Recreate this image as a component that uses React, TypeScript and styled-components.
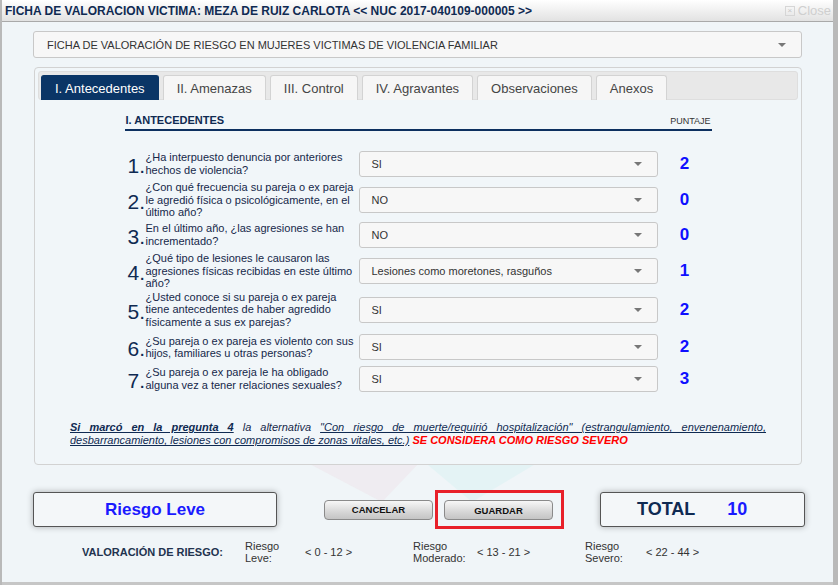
import React from "react";
import styled, { createGlobalStyle } from "styled-components";

const GlobalStyle = createGlobalStyle`
  *, *::before, *::after {
    box-sizing: border-box;
  }
  html, body {
    margin: 0;
    padding: 0;
    background: #b9b9b9;
    font-family: "Liberation Sans", Arial, sans-serif;
  }
`;

// preguntas de la ficha (h = alto de la fila)
const preguntas = [
  { texto: "¿Ha interpuesto denuncia por anteriores hechos de violencia?", valor: "SI", puntaje: 2, h: 35 },
  { texto: "¿Con qué frecuencia su pareja o ex pareja le agredió física o psicológicamente, en el último año?", valor: "NO", puntaje: 0, h: 36 },
  { texto: "En el último año, ¿las agresiones se han incrementado?", valor: "NO", puntaje: 0, h: 35 },
  { texto: "¿Qué tipo de lesiones le causaron las agresiones físicas recibidas en este último año?", valor: "Lesiones como moretones, rasguños", puntaje: 1, h: 36 },
  { texto: "¿Usted conoce si su pareja o ex pareja tiene antecedentes de haber agredido físicamente a sus ex parejas?", valor: "SI", puntaje: 2, h: 43 },
  { texto: "¿Su pareja o ex pareja es violento con sus hijos, familiares u otras personas?", valor: "SI", puntaje: 2, h: 32 },
  { texto: "¿Su pareja o ex pareja le ha obligado alguna vez a tener relaciones sexuales?", valor: "SI", puntaje: 3, h: 31 },
];

const tabs = ["I. Antecedentes", "II. Amenazas", "III. Control", "IV. Agravantes", "Observaciones", "Anexos"];

const Dialog = styled.div`
  position: relative;
  width: 831px;
  height: 585px;
  margin-left: 2px;
  background: #f0f5f8;
  border-bottom: 3px solid #c6c6c6;
  overflow: hidden;
`;

const TitleBar = styled.div`
  height: 22px;
  display: flex;
  align-items: center;
  justify-content: space-between;
  padding: 0 2px 0 3px;
  background: linear-gradient(#ffffff, #e2e2e2);
  border-bottom: 1px solid #a9a9a9;
`;

const Title = styled.span`
  font-size: 12px;
  font-weight: bold;
  color: #0f2a52;
`;

const Close = styled.span`
  display: flex;
  align-items: center;
  gap: 3px;
  font-size: 13px;
  color: #cfcfcf;
`;

const CloseBox = styled.span`
  width: 10px;
  height: 10px;
  border: 1px solid #d6d6d6;
  font-size: 8px;
  line-height: 8px;
  text-align: center;
  color: #c6c6c6;
`;

const Body = styled.div`
  position: relative;
  z-index: 1;
  padding: 9px 31px 0 31px;
`;

const Select = styled.div<{ wide?: boolean }>`
  height: ${({ wide }) => (wide ? 27 : 26)}px;
  display: flex;
  align-items: center;
  justify-content: space-between;
  padding: 0 15px 0 ${({ wide }) => (wide ? 13 : 12)}px;
  background: #f7f7f7;
  border: 1px solid #c8c8c8;
  border-radius: 3px;
  font-size: 11px;
  color: #333;
`;

const Caret = styled.span`
  width: 0;
  height: 0;
  border-left: 4px solid transparent;
  border-right: 4px solid transparent;
  border-top: 4px solid #777;
`;

const Panel = styled.div`
  margin-top: 9px;
  margin-left: 1px;
  border: 1px solid #d2d2d2;
  border-radius: 4px;
  background: #f1f6f9;
  padding: 3px 3px 0 3px;
`;

const TabBar = styled.div`
  height: 29px;
  display: flex;
  gap: 4px;
  padding: 3px 2px 0 2px;
  background: #e8e8e8;
  border: 1px solid #dedede;
  border-radius: 3px;
`;

const Tab = styled.div<{ active?: boolean }>`
  height: 25px;
  display: flex;
  align-items: center;
  padding: 0 13px;
  font-size: 13px;
  border: 1px solid ${({ active }) => (active ? "#0a3566" : "#d3d3d3")};
  border-bottom: none;
  border-radius: 3px 3px 0 0;
  background: ${({ active }) => (active ? "#0a3566" : "#f6f6f6")};
  color: ${({ active }) => (active ? "#fff" : "#454545")};
`;

const Content = styled.div`
  width: 587px;
  margin: 0 auto;
  padding-top: 14px;
`;

const SectionHead = styled.div`
  display: flex;
  justify-content: space-between;
  align-items: flex-end;
  padding: 0 1px 3px 1px;
  border-bottom: 2px solid #0d3060;
`;

const SectionTitle = styled.span`
  font-size: 11px;
  font-weight: bold;
  color: #0f2a52;
`;

const Puntaje = styled.span`
  font-size: 9px;
  color: #333;
`;

const Rows = styled.div`
  margin-top: 15px;
`;

const Row = styled.div<{ h: number }>`
  height: ${({ h }) => h}px;
  display: grid;
  grid-template-columns: 18px 213px 299px 54px;
  padding-left: 3px;
  align-items: center;
`;

const Num = styled.span`
  font-size: 21px;
  color: #0f2a52;
  line-height: 1;
  margin-top: 3px;
`;

const Pregunta = styled.span`
  font-size: 11px;
  line-height: 12.5px;
  color: #16284a;
`;

const Score = styled.span`
  font-size: 17px;
  font-weight: bold;
  color: #0f0fff;
  text-align: center;
`;

const Note = styled.p`
  width: 696px;
  margin: 27px auto 0 auto;
  padding-bottom: 17px;
  font-size: 11px;
  line-height: 13px;
  font-style: italic;
  text-align: justify;
  color: #16284a;
`;

const Link = styled.span<{ bold?: boolean }>`
  text-decoration: underline;
  color: #0f2a52;
  font-weight: ${({ bold }) => (bold ? "bold" : "normal")};
`;

const Alert = styled.span`
  color: #ff0000;
  font-weight: bold;
`;

const Footer = styled.div`
  display: flex;
  align-items: center;
  margin-top: 25px;

  & > * {
    flex-shrink: 0;
  }
`;

const ResultBox = styled.div<{ w: number }>`
  width: ${({ w }) => w}px;
  height: 35px;
  display: flex;
  align-items: center;
  background: #f4f7f9;
  border: 1px solid #555;
  border-radius: 3px;
  box-shadow: 0 0 6px rgba(0, 0, 0, 0.3);
`;

const Riesgo = styled.span`
  flex: 1;
  text-align: center;
  font-size: 17px;
  font-weight: bold;
  color: #1a1aff;
`;

const Button = styled.button`
  width: 109px;
  height: 20px;
  padding: 0;
  border: 1px solid #8a8a8a;
  border-radius: 4px;
  background: linear-gradient(#f7f7f7, #d9d9d9 55%, #c4c4c4);
  font-family: "Liberation Sans", Arial, sans-serif;
  font-size: 9.5px;
  font-weight: bold;
  color: #111;
`;

const Highlight = styled.div`
  display: flex;
  margin-left: 2px;
  padding: 7px 8px 6px 6px;
  border: 3px solid #e8202a;
`;

const TotalLabel = styled.span`
  margin-left: 36px;
  font-size: 18px;
  font-weight: bold;
  color: #0f2a52;
`;

const TotalValue = styled.span`
  margin-left: 32px;
  font-size: 18px;
  font-weight: bold;
  color: #1a1aff;
`;

const Scale = styled.div`
  display: grid;
  grid-template-columns: 163px 60px 108px 64px 108px 61px auto;
  align-items: center;
  margin-top: 11px;
  padding-left: 80px;
  font-size: 11px;
  color: #333;
`;

const ScaleLabel = styled.span`
  font-size: 11px;
  font-weight: bold;
  color: #22334f;
`;

const Term = styled.span`
  line-height: 12px;
`;

const Watermark = styled.svg`
  position: absolute;
  left: 290px;
  top: 440px;
  z-index: 0;
`;

export default function App() {
  return (
    <>
      <GlobalStyle />
      <Dialog>
        <TitleBar>
          <Title>FICHA DE VALORACION VICTIMA: MEZA DE RUIZ CARLOTA &lt;&lt; NUC 2017-040109-000005 &gt;&gt;</Title>
          <Close>
            <CloseBox>×</CloseBox>Close
          </Close>
        </TitleBar>
        <Watermark width="260" height="70" viewBox="0 0 260 70">
          <polygon points="10,20 130,20 90,62" fill="#eee3ea" opacity="0.5" />
          <polygon points="130,20 250,20 180,62" fill="#dcf1f4" opacity="0.6" />
        </Watermark>
        <Body>
          <Select wide>
            FICHA DE VALORACIÓN DE RIESGO EN MUJERES VICTIMAS DE VIOLENCIA FAMILIAR
            <Caret />
          </Select>
          <Panel>
            <TabBar>
              {tabs.map((t, i) => (
                <Tab key={t} active={i === 0}>
                  {t}
                </Tab>
              ))}
            </TabBar>
            <Content>
              <SectionHead>
                <SectionTitle>I. ANTECEDENTES</SectionTitle>
                <Puntaje>PUNTAJE</Puntaje>
              </SectionHead>
              <Rows>
                {preguntas.map((p, i) => (
                  <Row key={i} h={p.h}>
                    <Num>{i + 1}.</Num>
                    <Pregunta>{p.texto}</Pregunta>
                    <Select>
                      {p.valor}
                      <Caret />
                    </Select>
                    <Score>{p.puntaje}</Score>
                  </Row>
                ))}
              </Rows>
            </Content>
            <Note>
              <Link bold>Si marcó en la pregunta 4</Link> la alternativa{" "}
              <Link>
                "Con riesgo de muerte/requirió hospitalización" (estrangulamiento, envenenamiento,
                desbarrancamiento, lesiones con compromisos de zonas vitales, etc.)
              </Link>{" "}
              <Alert>SE CONSIDERA COMO RIESGO SEVERO</Alert>
            </Note>
          </Panel>
          <Footer>
            <ResultBox w={244}>
              <Riesgo>Riesgo Leve</Riesgo>
            </ResultBox>
            <Button style={{ marginLeft: 47 }}>CANCELAR</Button>
            <Highlight>
              <Button>GUARDAR</Button>
            </Highlight>
            <ResultBox w={205} style={{ marginLeft: 36 }}>
              <TotalLabel>TOTAL</TotalLabel>
              <TotalValue>10</TotalValue>
            </ResultBox>
          </Footer>
        </Body>
        <Scale>
          <ScaleLabel>VALORACIÓN DE RIESGO:</ScaleLabel>
          <Term>
            Riesgo
            <br />
            Leve:
          </Term>
          <span>&lt; 0 - 12 &gt;</span>
          <Term>
            Riesgo
            <br />
            Moderado:
          </Term>
          <span>&lt; 13 - 21 &gt;</span>
          <Term>
            Riesgo
            <br />
            Severo:
          </Term>
          <span>&lt; 22 - 44 &gt;</span>
        </Scale>
      </Dialog>
    </>
  );
}
